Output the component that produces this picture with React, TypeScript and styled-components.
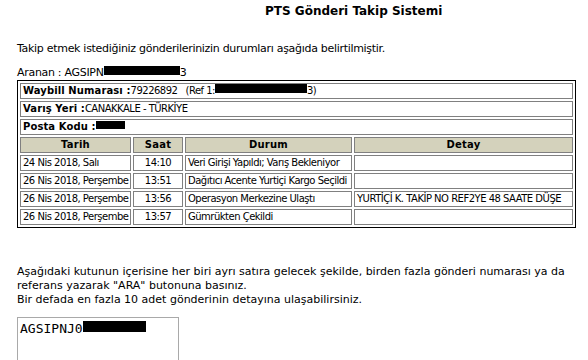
import React from 'react';
import styled, { createGlobalStyle } from 'styled-components';

const GlobalStyle = createGlobalStyle`
  body {
    margin: 0;
    background: #ffffff;
    color: #000000;
    font-family: 'DejaVu Sans', Verdana, sans-serif;
  }
`;

interface Movement {
  date: string;
  time: string;
  status: string;
  detail: string;
}

const movements: Movement[] = [
  { date: '24 Nis 2018, Salı', time: '14:10', status: 'Veri Girişi Yapıldı; Varış Bekleniyor', detail: '' },
  { date: '26 Nis 2018, Perşembe', time: '13:51', status: 'Dağıtıcı Acente Yurtiçi Kargo Seçildi', detail: '' },
  { date: '26 Nis 2018, Perşembe', time: '13:56', status: 'Operasyon Merkezine Ulaştı', detail: 'YURTİÇİ K. TAKİP NO REF2YE 48 SAATE DÜŞE' },
  { date: '26 Nis 2018, Perşembe', time: '13:57', status: 'Gümrükten Çekildi', detail: '' },
];

const App: React.FC = () => {
  return (
    <>
      <GlobalStyle />
      <Page>
        <Title>PTS Gönderi Takip Sistemi</Title>
        <Intro>Takip etmek istediğiniz gönderilerinizin durumları aşağıda belirtilmiştir.</Intro>
        <Searched>
          Aranan : AGSIPN<Redacted $w={76} $h={9} />3
        </Searched>

        <ResultTable>
          <colgroup>
            <col style={{ width: 111 }} />
            <col style={{ width: 50 }} />
            <col style={{ width: 167 }} />
            <col />
          </colgroup>
          <tbody>
            <tr>
              <Cell colSpan={4}>
                <Label>Waybill Numarası :</Label>79226892&nbsp;&nbsp;&nbsp;(Ref 1:<Redacted $w={92} $h={9} />3)
              </Cell>
            </tr>
            <tr>
              <Cell colSpan={4}>
                <Label>Varış Yeri :</Label>CANAKKALE - TÜRKİYE
              </Cell>
            </tr>
            <tr>
              <Cell colSpan={4}>
                <Label>Posta Kodu :</Label>
                <Redacted $w={29} $h={8} />
              </Cell>
            </tr>
            <tr>
              <HeadCell>Tarih</HeadCell>
              <HeadCell>Saat</HeadCell>
              <HeadCell>Durum</HeadCell>
              <HeadCell>Detay</HeadCell>
            </tr>
            {movements.map((m, i) => (
              <tr key={i}>
                <Cell>{m.date}</Cell>
                <Cell $center>{m.time}</Cell>
                <Cell>{m.status}</Cell>
                <Cell>{m.detail}</Cell>
              </tr>
            ))}
          </tbody>
        </ResultTable>

        <Help>
          Aşağıdaki kutunun içerisine her biri ayrı satıra gelecek şekilde, birden fazla gönderi numarası ya da
          referans yazarak "ARA" butonuna basınız.
          <br />
          Bir defada en fazla 10 adet gönderinin detayına ulaşabilirsiniz.
        </Help>

        <NumberBox>
          AGSIPNJ0<Redacted $w={63} $h={11} />
        </NumberBox>
      </Page>
    </>
  );
};

export default App;

// Styled Components
const Page = styled.div`
  padding: 0 12px 0 17px;
  font-size: 11px;
  letter-spacing: -0.3px;
`;

const Title = styled.div`
  padding: 3px 0 0 248px;
  height: 17px;
  line-height: 17px;
  font-size: 12px;
  font-weight: 700;
  letter-spacing: 0;
`;

const Intro = styled.div`
  margin-top: 21px;
  line-height: 15px;
`;

const Searched = styled.div`
  margin-top: 9px;
  line-height: 15px;
`;

const Redacted = styled.span<{ $w: number; $h: number }>`
  display: inline-block;
  width: ${(p) => p.$w}px;
  height: ${(p) => p.$h}px;
  background: #000000;
  vertical-align: baseline;
  margin-bottom: 1px;
`;

const ResultTable = styled.table`
  width: 559px;
  table-layout: fixed;
  border: 1px solid #000000;
  border-spacing: 2px;
  font-size: 10px;
  letter-spacing: -0.5px;
`;

const Cell = styled.td<{ $center?: boolean }>`
  height: 14px;
  padding: 0 2px;
  border: 1px solid #808080;
  line-height: 14px;
  white-space: nowrap;
  overflow: hidden;
  text-align: ${(p) => (p.$center ? 'center' : 'left')};
`;

const Label = styled.b`
  font-weight: 700;
  letter-spacing: 0.1px;
`;

const HeadCell = styled.th`
  height: 14px;
  padding: 0 2px;
  border: 1px solid #808080;
  background: #d4d2bc;
  line-height: 14px;
  font-weight: 700;
  letter-spacing: 0.2px;
  text-align: center;
`;

const Help = styled.div`
  margin-top: 37px;
  line-height: 14px;
  letter-spacing: 0;
`;

const NumberBox = styled.div`
  margin-top: 10px;
  width: 156px;
  height: 60px;
  padding: 3px 2px;
  border: 1px solid #a9a9a9;
  font-family: 'DejaVu Sans Mono', 'Liberation Mono', monospace;
  font-size: 13px;
  line-height: 15px;
  letter-spacing: 0;
`;
